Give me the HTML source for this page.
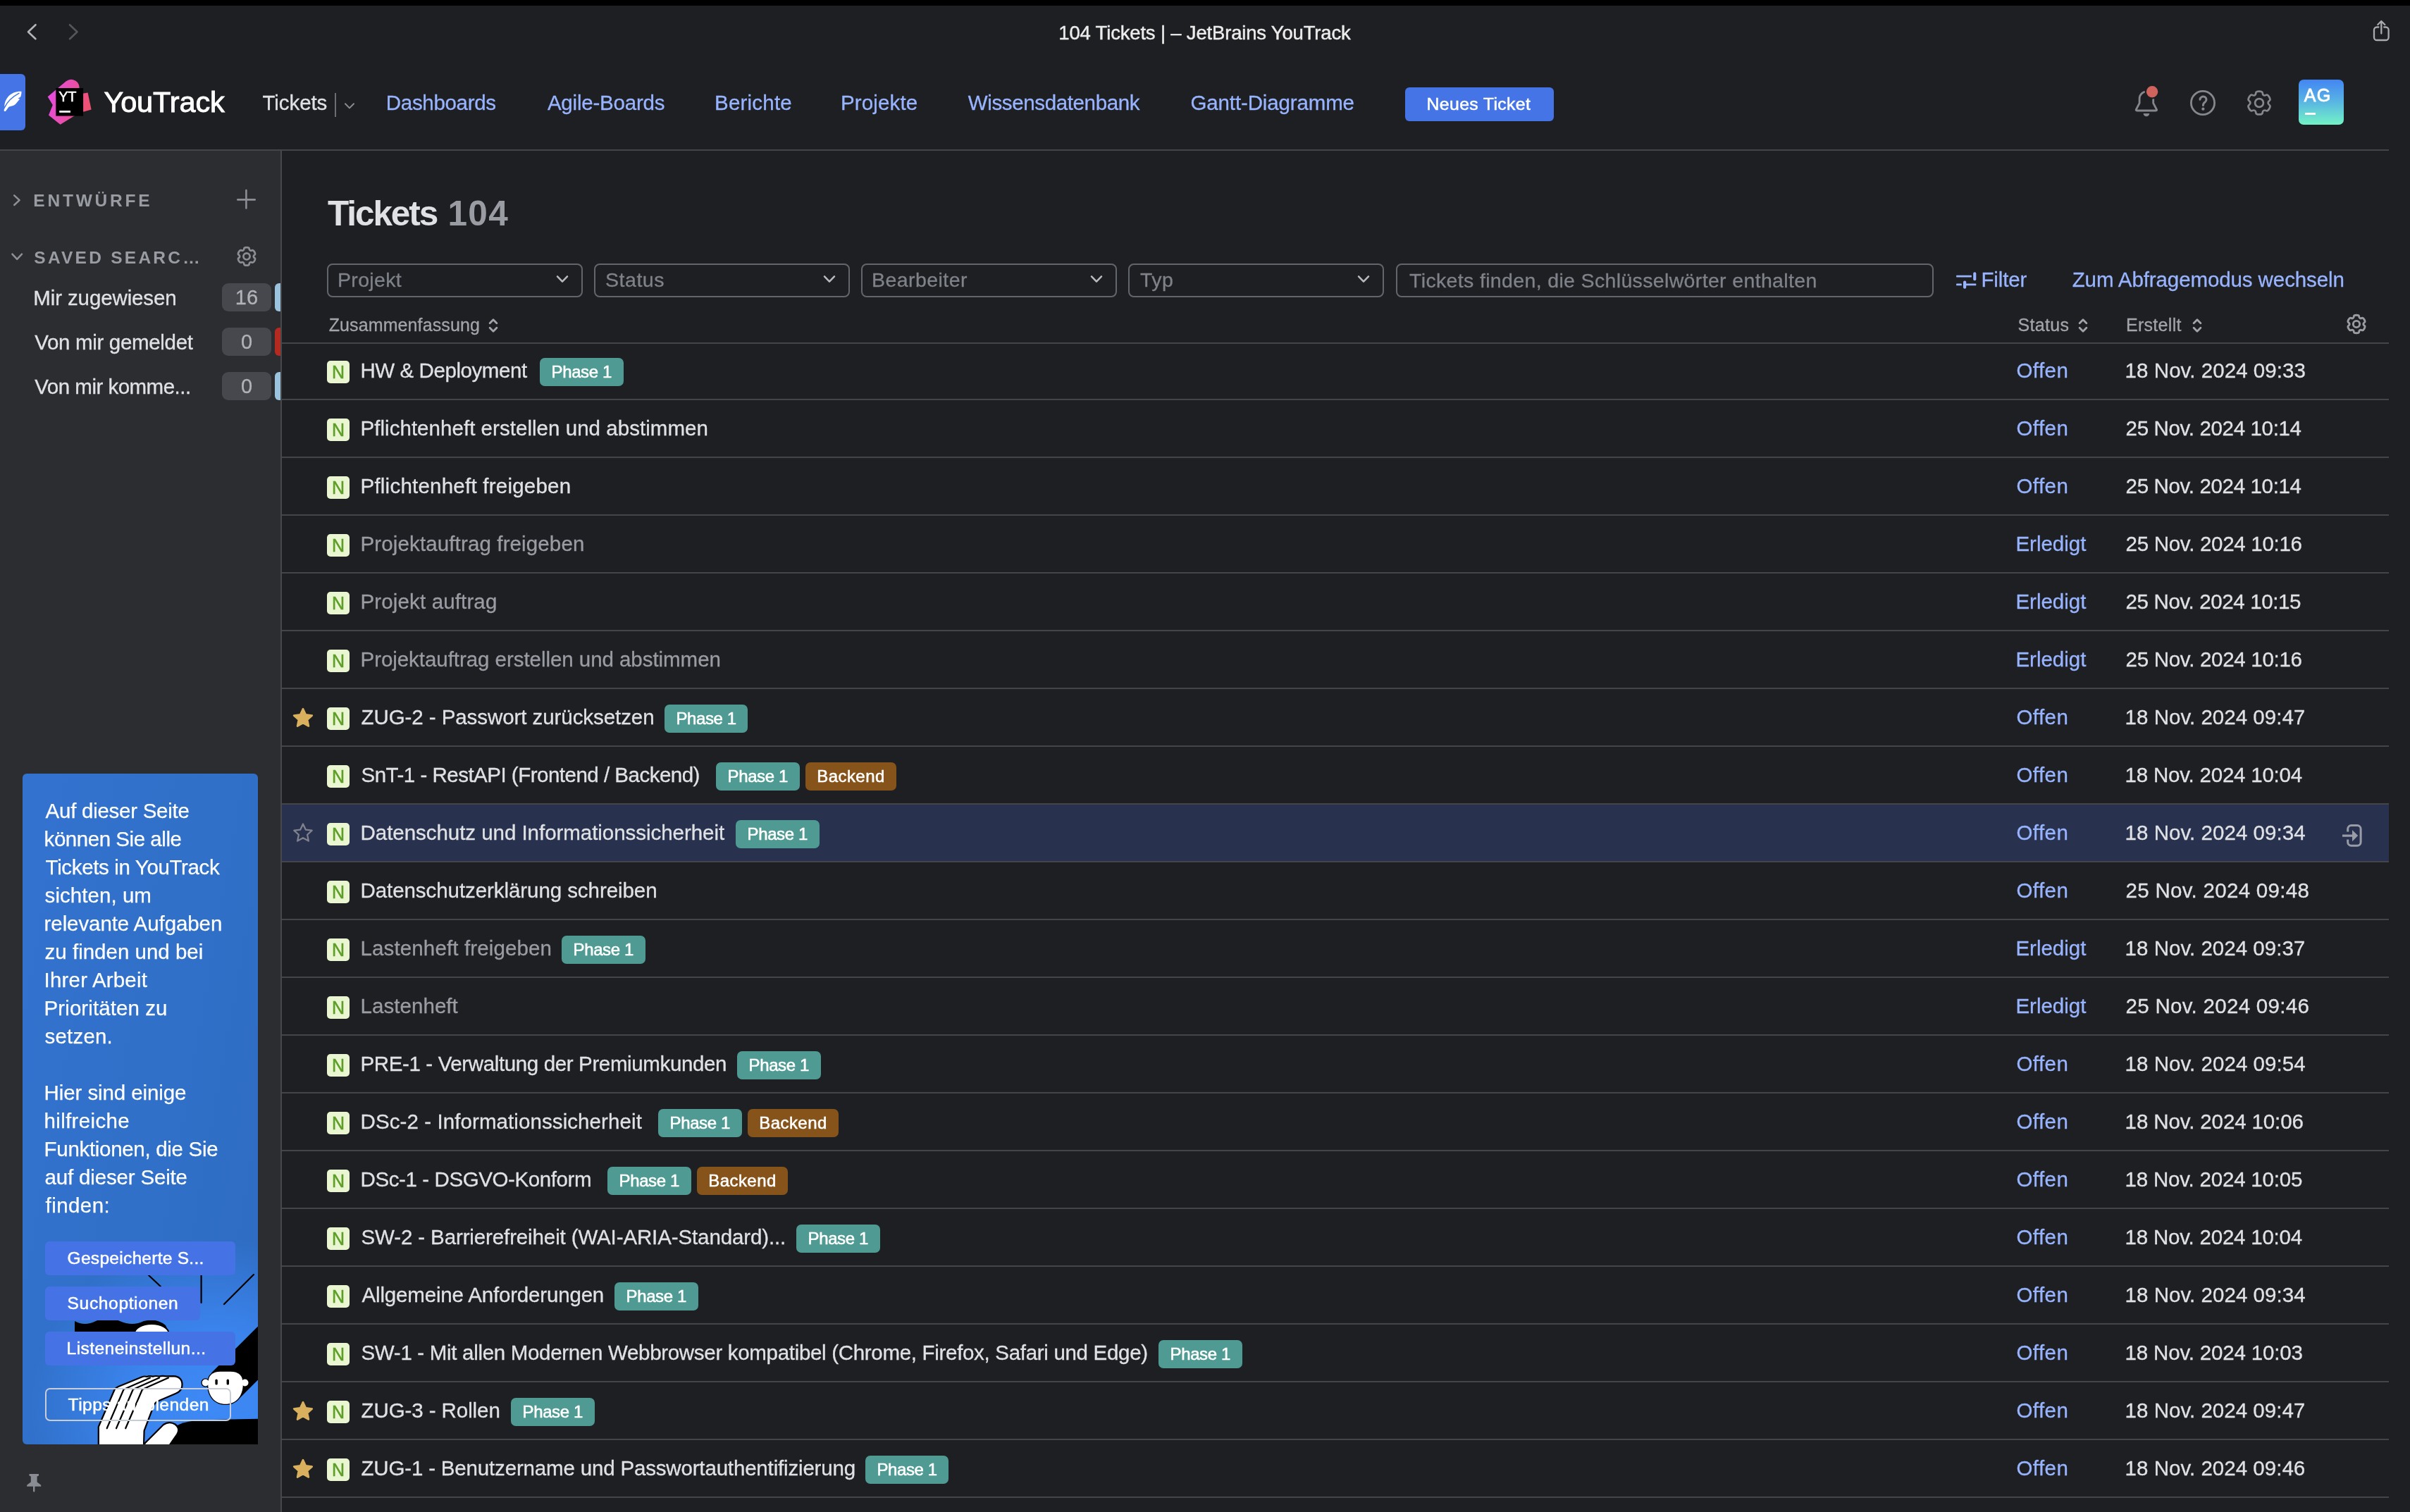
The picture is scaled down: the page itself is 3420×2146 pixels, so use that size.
<!DOCTYPE html>
<html lang="de"><head><meta charset="utf-8"><title>104 Tickets | – JetBrains YouTrack</title>
<style>
html,body{margin:0;padding:0}
body{width:3420px;height:2146px;background:#1e1f22;position:relative;overflow:hidden;font-family:"Liberation Sans", sans-serif;color:#dfe1e5}
.a,.t,.n,.tag,.box,.ln{position:absolute}
.t{white-space:pre;display:inline-block}
header,aside,main,section{position:absolute;left:0;top:0;width:0;height:0}
.ln{background:#43454a;height:2px;left:400px;width:2990px}
.n{left:464px;width:32px;height:32px;border-radius:5px;background:#eaf5d2;color:#5c9f27;font-style:normal;font-size:25px;line-height:33px;text-align:center;-webkit-text-stroke:0.5px #5c9f27}
.tag{height:40px;border-radius:7px;color:#fff;font-weight:400;font-size:24px;line-height:39px;text-align:center;-webkit-text-stroke:0.55px #fff;letter-spacing:-0.4px}
.tag.p{width:118.5px;background:#4f9a92}
.tag.b{width:129px;background:#86531a;letter-spacing:0.45px}
.box{height:44px;top:374px;border:2px solid #63656c;border-radius:8px}
.badge{position:absolute;left:315px;width:70px;height:40px;border-radius:9px;background:#46484d}
.stripe{position:absolute;left:390px;width:8px;height:40px;border-radius:6px 0 0 6px}
.btn{position:absolute;left:64px;height:48px;border-radius:6px;background:#4573e6}
</style></head><body>
<div id="app" style="position:absolute;left:0;top:0;width:3420px;height:2146px;will-change:transform">

<div class="a" style="left:0;top:0;width:3420px;height:8px;background:#000"></div>
<header>
<svg class="a" style="left:30px;top:26px" width="100" height="40" viewBox="30 26 100 40" fill="none" stroke-width="2.6" stroke-linecap="round" stroke-linejoin="round"><path d="M50.5 35.2 L40 45.2 L50.5 55.2" stroke="#b4b5b9"/><path d="M99 35.2 L109.5 45.2 L99 55.2" stroke="#54565b"/></svg>
<svg class="a" style="left:3360px;top:24px" width="40" height="40" viewBox="3360 24 40 40" fill="none" stroke="#a9aaae" stroke-width="2.3" stroke-linecap="round" stroke-linejoin="round"><path d="M3375.4 38.5 H3373 a4 4 0 0 0 -4 4 V53 a4 4 0 0 0 4 4 H3385.6 a4 4 0 0 0 4 -4 V42.5 a4 4 0 0 0 -4 -4 H3383.2"/><path d="M3379.3 47.5 V30.6 M3374.3 35 L3379.3 30 L3384.3 35"/></svg>
<div class="a" style="left:0;top:105px;width:36px;height:80px;background:#4474e6;border-radius:0 6px 6px 0"></div>
<svg class="a" style="left:0;top:120px" width="40" height="50" viewBox="0 120 40 50"><path d="M30.5 129.8 C24 129.4 16 131.8 11.5 137.2 C8 141.2 6.4 146 6.25 150.8 L7.2 152.6 L5.7 155.8 Q5.2 157.2 6.3 157.9 Q7.5 158.5 8.3 157.4 L11.9 152.4 Q12.6 151.5 13.7 151.2 C18 150.4 21 149 22.8 146.9 C25 144.5 27 142.2 28.1 140.6 L25.5 139.7 L29.2 137.6 C30.2 135 30.6 132 30.5 129.8 Z" fill="#fff"/><path d="M6.9 151.9 C11 143.5 18 137.2 26.9 132.4" stroke="#4474e6" stroke-width="1.5" fill="none" stroke-linecap="round"/></svg>
<svg class="a" style="left:60px;top:105px" width="80" height="80" viewBox="60 105 80 80"><linearGradient id="lg1" x1="0" y1="0" x2="1" y2="0.3"><stop offset="0" stop-color="#e54cf0"/><stop offset="0.6" stop-color="#ea4ea8"/><stop offset="1" stop-color="#ee5273"/></linearGradient><path d="M67.7 137.3 L93.5 115.5 Q100 110.5 107 114.5 Q112.3 117.5 112.6 124 L113 133.5 L124.6 131.6 L129.6 155.6 L112 160.5 L85.6 176.8 L69 163.4 L74.8 149 Z" fill="url(#lg1)"/><rect x="79.3" y="125" width="38.8" height="39.6" fill="#000"/><rect x="84.2" y="157" width="15.8" height="2.8" fill="#fff"/></svg>
<span class="t" style="left:83.2px;top:126.2px;font-size:20px;line-height:22px;color:#fff;letter-spacing:-0.4px;-webkit-text-stroke:0.5px #fff">YT</span>
<div class="a" style="left:475.4px;top:132px;width:1.6px;height:34px;background:#6b6d74"></div>
<svg class="a" style="left:484px;top:140px" width="24" height="20" viewBox="-12 -10 24 20" fill="none" stroke="#8a8c93" stroke-width="2.3" stroke-linecap="round" stroke-linejoin="round"><path d="M-7 -3.6 L0 3.6 L7 -3.6" transform="translate(0,0.3) scale(0.86)"/></svg>
<div class="a" style="left:1994px;top:124px;width:211px;height:48px;border-radius:6px;background:#4474e6"></div>
<svg class="a" style="left:3020px;top:115px" width="60" height="60" viewBox="3020 115 60 60" fill="none" stroke="#85878e" stroke-width="2.8" stroke-linecap="round" stroke-linejoin="round"><path d="M3036.1 146.3 V139.9 A9.8 9.8 0 0 1 3055.7 139.9 V146.3 L3060.3 155.2 Q3061.2 157 3059.2 157 H3032.6 Q3030.6 157 3031.5 155.2 Z"/><path d="M3041.6 161 H3050.2 A4.3 4.3 0 0 1 3041.6 161 Z" fill="#85878e" stroke="none"/><circle cx="3054.1" cy="130.2" r="10.4" fill="#1e1f22" stroke="none"/><circle cx="3054.1" cy="130.2" r="8.2" fill="#d0635e" stroke="none"/></svg>
<svg class="a" style="left:3100px;top:120px" width="52" height="52" viewBox="3100 120 52 52" fill="none" stroke="#85878e" stroke-width="2.8" stroke-linecap="round" stroke-linejoin="round"><circle cx="3126" cy="146" r="16.6"/><path d="M3122 141.3 A4.5 4.3 0 1 1 3129.4 144.6 C3127.6 145.9 3126.4 147 3126.4 149.6" stroke-width="3"/><circle cx="3126.4" cy="154.7" r="2.15" fill="#85878e" stroke="none"/></svg>
<svg class="a" style="left:3180px;top:120px" width="52" height="52" viewBox="-26 -26 52 52" fill="none" stroke="#85878e" stroke-width="2.1" stroke-linejoin="round"><g transform="scale(1.285)"><path d="M-3.63 -11.00 Q-3.55 -12.82 0.00 -12.82 Q3.55 -12.82 3.63 -11.00 Q3.71 -9.18 4.90 -8.49 Q6.10 -7.80 7.71 -8.64 Q9.32 -9.49 11.10 -6.41 Q12.88 -3.33 11.34 -2.35 Q9.80 -1.38 9.80 -0.00 Q9.80 1.38 11.34 2.35 Q12.88 3.33 11.10 6.41 Q9.32 9.49 7.71 8.64 Q6.10 7.80 4.90 8.49 Q3.71 9.18 3.63 11.00 Q3.55 12.82 0.00 12.82 Q-3.55 12.82 -3.63 11.00 Q-3.71 9.18 -4.90 8.49 Q-6.10 7.80 -7.71 8.64 Q-9.32 9.49 -11.10 6.41 Q-12.88 3.33 -11.34 2.35 Q-9.80 1.38 -9.80 0.00 Q-9.80 -1.38 -11.34 -2.35 Q-12.88 -3.33 -11.10 -6.41 Q-9.32 -9.49 -7.71 -8.64 Q-6.10 -7.80 -4.90 -8.49 Q-3.71 -9.18 -3.63 -11.00Z"/><circle r="4.6"/></g></svg>
<div class="a" style="left:3262px;top:113px;width:64px;height:64px;border-radius:7px;background:linear-gradient(180deg,#4285f4 0%,#5ab6e2 50%,#72f3c5 100%)"></div>
<div class="a" style="left:3271px;top:160.4px;width:14.6px;height:2.6px;background:#fff"></div>
<div class="a" style="left:0;top:212px;width:3390px;height:2px;background:#43454a"></div>
<span class="t" id="t0" style="left:1502.3px;top:29.9px;font-size:27.5px;line-height:33px;color:#ececec;letter-spacing:-0.18px;-webkit-text-stroke:0.45px #ececec;">104 Tickets | – JetBrains YouTrack</span>
<span class="t" id="t1" style="left:147.4px;top:120.3px;font-size:41.5px;line-height:50px;color:#ffffff;letter-spacing:-0.11px;-webkit-text-stroke:0.9px #ffffff;">YouTrack</span>
<span class="t" id="t2" style="left:372.5px;top:128.1px;font-size:29.5px;line-height:35px;color:#dfe1e5;letter-spacing:-0.08px;-webkit-text-stroke:0.3px #dfe1e5;">Tickets</span>
<span class="t" id="t3" style="left:547.8px;top:128.1px;font-size:29.5px;line-height:35px;color:#98b4ff;letter-spacing:-0.31px;-webkit-text-stroke:0.3px #98b4ff;">Dashboards</span>
<span class="t" id="t4" style="left:776.9px;top:128.1px;font-size:29.5px;line-height:35px;color:#98b4ff;letter-spacing:-0.20px;-webkit-text-stroke:0.3px #98b4ff;">Agile-Boards</span>
<span class="t" id="t5" style="left:1014.0px;top:128.1px;font-size:29.5px;line-height:35px;color:#98b4ff;letter-spacing:0.21px;-webkit-text-stroke:0.3px #98b4ff;">Berichte</span>
<span class="t" id="t6" style="left:1193.0px;top:128.1px;font-size:29.5px;line-height:35px;color:#98b4ff;letter-spacing:0.14px;-webkit-text-stroke:0.3px #98b4ff;">Projekte</span>
<span class="t" id="t7" style="left:1373.8px;top:128.1px;font-size:29.5px;line-height:35px;color:#98b4ff;letter-spacing:-0.37px;-webkit-text-stroke:0.3px #98b4ff;">Wissensdatenbank</span>
<span class="t" id="t8" style="left:1689.5px;top:128.1px;font-size:29.5px;line-height:35px;color:#98b4ff;letter-spacing:-0.14px;-webkit-text-stroke:0.3px #98b4ff;">Gantt-Diagramme</span>
<span class="t" id="t9" style="left:2024.6px;top:132.8px;font-size:24.8px;line-height:30px;color:#ffffff;letter-spacing:0.36px;-webkit-text-stroke:0.55px #ffffff;">Neues Ticket</span>
<span class="t" id="t10" style="left:3269.7px;top:119.8px;font-size:25px;line-height:30px;color:#ffffff;letter-spacing:1.40px;-webkit-text-stroke:0.8px #ffffff;">AG</span>
</header>

<aside>
<div class="a" style="left:0;top:214px;width:398px;height:1932px;background:#2b2d30"></div>
<div class="a" style="left:398px;top:214px;width:2px;height:1932px;background:#46484c"></div>
<svg class="a" style="left:10px;top:270px" width="30" height="28" viewBox="10 270 30 28" fill="none" stroke="#8e9097" stroke-width="2.5" stroke-linecap="round" stroke-linejoin="round"><path d="M20.2 277.4 L27.6 284.2 L20.2 291"/></svg>
<svg class="a" style="left:330px;top:264px" width="40" height="40" viewBox="330 264 40 40" fill="none" stroke="#8c8e95" stroke-width="2.6" stroke-linecap="round"><path d="M337.3 283.4 H361.7 M349.4 270.1 V295.5"/></svg>
<svg class="a" style="left:10px;top:352px" width="30" height="26" viewBox="10 352 30 26" fill="none" stroke="#8e9097" stroke-width="2.5" stroke-linecap="round" stroke-linejoin="round"><path d="M17.4 360.6 L24.2 367.8 L31 360.6"/></svg>
<svg class="a" style="left:330px;top:344px" width="40" height="40" viewBox="-20 -19.9 40 40" fill="none" stroke="#8c8e95" stroke-width="2.7" stroke-linejoin="round"><g><path d="M-3.63 -11.00 Q-3.55 -12.82 0.00 -12.82 Q3.55 -12.82 3.63 -11.00 Q3.71 -9.18 4.90 -8.49 Q6.10 -7.80 7.71 -8.64 Q9.32 -9.49 11.10 -6.41 Q12.88 -3.33 11.34 -2.35 Q9.80 -1.38 9.80 -0.00 Q9.80 1.38 11.34 2.35 Q12.88 3.33 11.10 6.41 Q9.32 9.49 7.71 8.64 Q6.10 7.80 4.90 8.49 Q3.71 9.18 3.63 11.00 Q3.55 12.82 0.00 12.82 Q-3.55 12.82 -3.63 11.00 Q-3.71 9.18 -4.90 8.49 Q-6.10 7.80 -7.71 8.64 Q-9.32 9.49 -11.10 6.41 Q-12.88 3.33 -11.34 2.35 Q-9.80 1.38 -9.80 0.00 Q-9.80 -1.38 -11.34 -2.35 Q-12.88 -3.33 -11.10 -6.41 Q-9.32 -9.49 -7.71 -8.64 Q-6.10 -7.80 -4.90 -8.49 Q-3.71 -9.18 -3.63 -11.00Z"/><circle r="4.6"/></g></svg>

<div class="badge" style="top:402px"></div><div class="stripe" style="top:402px;background:#9cc3dd"></div>
<div class="badge" style="top:465px"></div><div class="stripe" style="top:465px;background:#b52a20"></div>
<div class="badge" style="top:528px"></div><div class="stripe" style="top:528px;background:#9cc3dd"></div>
<span class="t" id="t11" style="left:47.3px;top:270.3px;font-size:24.5px;line-height:29px;color:#9a9ca4;font-weight:700;letter-spacing:3.80px;">ENTWÜRFE</span>
<span class="t" id="t12" style="left:48.3px;top:350.5px;font-size:24.5px;line-height:29px;color:#9a9ca4;font-weight:700;letter-spacing:3.25px;">SAVED SEARC…</span>
<span class="t" id="t13" style="left:47.3px;top:404.5px;font-size:29.5px;line-height:35px;color:#dfe1e5;letter-spacing:-0.12px;-webkit-text-stroke:0.3px #dfe1e5;">Mir zugewiesen</span>
<span class="t" id="t14" style="left:350.0px;top:405.0px;font-size:29px;line-height:35px;color:#b1b3ba;-webkit-text-stroke:0.3px #b1b3ba;transform:translateX(-50%);">16</span>
<span class="t" id="t15" style="left:49.3px;top:467.5px;font-size:29.5px;line-height:35px;color:#dfe1e5;letter-spacing:-0.33px;-webkit-text-stroke:0.3px #dfe1e5;">Von mir gemeldet</span>
<span class="t" id="t16" style="left:350.0px;top:468.0px;font-size:29px;line-height:35px;color:#b1b3ba;-webkit-text-stroke:0.3px #b1b3ba;transform:translateX(-50%);">0</span>
<span class="t" id="t17" style="left:49.3px;top:530.5px;font-size:29.5px;line-height:35px;color:#dfe1e5;letter-spacing:-0.51px;-webkit-text-stroke:0.3px #dfe1e5;">Von mir komme...</span>
<span class="t" id="t18" style="left:350.0px;top:531.0px;font-size:29px;line-height:35px;color:#b1b3ba;-webkit-text-stroke:0.3px #b1b3ba;transform:translateX(-50%);">0</span>
<section>
<div class="a" style="left:32px;top:1098px;width:334px;height:952px;border-radius:6px 6px 0 6px;background:linear-gradient(100deg,#3372cf 0%,#3070c8 55%,#2f6cc2 100%);overflow:hidden">
<div class="a" style="left:0;top:640px;width:334px;height:312px;background:radial-gradient(ellipse 260px 240px at 270px 260px,#3d89f5 0%,#3b84ee 45%,rgba(59,132,238,0) 100%)"></div>
<svg class="a" style="left:0;top:0" width="334" height="952" viewBox="32 1098 334 952">
<g stroke="#000" stroke-width="2.2" fill="none" stroke-linecap="round"><path d="M211 1810 L228 1826 M285.6 1808 V1849 M360 1809 L318 1851"/></g>
<path d="M106 1895 V1875 q14 8 30 0 t34 0 t34 0 q18 -5 31 6 q3 5 3 14 Z" fill="#000"/>
<ellipse cx="215.2" cy="1893" rx="24.5" ry="14" fill="#fff" stroke="#000" stroke-width="2"/>
<path d="M368 1880.5 L300 1948.5 L335 1989.5 L368 1956.5 Z" fill="#000"/>
<path d="M236 2052 L250 2024 Q262 2016.5 290 2015.3 L368 2013.6 V2052 Z" fill="#000"/>
<g fill="#000"><circle cx="291.6" cy="1962.5" r="6.2"/><circle cx="347.6" cy="1962.5" r="6.2"/><path d="M294 1964 Q294 1945.5 313 1945.5 H327 Q346 1945.5 346 1964 C346 1984 334.5 1994 320 1994 C305.5 1994 294 1984 294 1964 Z"/></g>
<g fill="#fff"><circle cx="291.6" cy="1962.5" r="4.9"/><circle cx="347.6" cy="1962.5" r="4.9"/><path d="M295.2 1964 Q295.2 1946.7 313 1946.7 H327 Q344.8 1946.7 344.8 1964 C344.8 1983 334 1992.8 320 1992.8 C306 1992.8 295.2 1983 295.2 1964 Z"/></g>
<rect x="305.4" y="1957.6" width="3.4" height="8" rx="1.7" fill="#000"/><rect x="321.6" y="1957.6" width="3.4" height="8" rx="1.7" fill="#000"/>
<path d="M139.8 2052 V2025 L162.5 1972.5 Q164 1969.5 168 1968 L201 1954.4 Q205 1952.8 208.5 1954 Q212 1952.6 217 1953.6 Q221 1952.4 226 1953.6 Q230 1952.4 236 1953.4 L246 1953.2 Q258.5 1954 258.5 1965 Q258.5 1974.5 249 1978 L224.5 1988.5 Q218.5 1991.5 217 1998 L204.6 2030.6 L204 2052 Z" fill="#fff" stroke="#000" stroke-width="2.2" stroke-linejoin="round"/>
<g stroke="#000" stroke-width="2.2" fill="none" stroke-linecap="round" stroke-linejoin="round"><path d="M151.7 2027.3 L175.5 1972 L213 1955.6"/><path d="M165 2027.3 L188.8 1972 L226 1955.6"/><path d="M178.2 2027.3 L202 1972 L239 1955.6"/></g>
<path d="M204 2052 L206 2048 L232 2022 Q240 2016.5 248.5 2021.5 Q256.5 2027.5 251 2036 L240 2052 Z" fill="#fff" stroke="#000" stroke-width="2.2" stroke-linejoin="round"/>
</svg></div>
<div class="btn" style="top:1762px;width:270px"></div>
<div class="btn" style="top:1826px;width:220px"></div>
<div class="btn" style="top:1890px;width:270px"></div>
<div class="a" style="left:64.2px;top:1970.3px;width:259.4px;height:42.8px;border:2.4px solid #c9cdd8;border-radius:7px"></div>
<span class="t" id="t19" style="left:64.6px;top:1132.8px;font-size:29.5px;line-height:35px;color:#ffffff;letter-spacing:-0.27px;-webkit-text-stroke:0.25px #ffffff;">Auf dieser Seite</span>
<span class="t" id="t20" style="left:62.6px;top:1172.8px;font-size:29.5px;line-height:35px;color:#ffffff;letter-spacing:-0.46px;-webkit-text-stroke:0.25px #ffffff;">können Sie alle</span>
<span class="t" id="t21" style="left:64.6px;top:1212.8px;font-size:29.5px;line-height:35px;color:#ffffff;letter-spacing:-0.36px;-webkit-text-stroke:0.25px #ffffff;">Tickets in YouTrack</span>
<span class="t" id="t22" style="left:63.6px;top:1252.8px;font-size:29.5px;line-height:35px;color:#ffffff;letter-spacing:0.05px;-webkit-text-stroke:0.25px #ffffff;">sichten, um</span>
<span class="t" id="t23" style="left:62.6px;top:1292.8px;font-size:29.5px;line-height:35px;color:#ffffff;letter-spacing:-0.09px;-webkit-text-stroke:0.25px #ffffff;">relevante Aufgaben</span>
<span class="t" id="t24" style="left:63.6px;top:1332.8px;font-size:29.5px;line-height:35px;color:#ffffff;-webkit-text-stroke:0.25px #ffffff;">zu finden und bei</span>
<span class="t" id="t25" style="left:62.6px;top:1372.8px;font-size:29.5px;line-height:35px;color:#ffffff;letter-spacing:0.18px;-webkit-text-stroke:0.25px #ffffff;">Ihrer Arbeit</span>
<span class="t" id="t26" style="left:62.6px;top:1412.8px;font-size:29.5px;line-height:35px;color:#ffffff;letter-spacing:0.08px;-webkit-text-stroke:0.25px #ffffff;">Prioritäten zu</span>
<span class="t" id="t27" style="left:63.6px;top:1452.8px;font-size:29.5px;line-height:35px;color:#ffffff;letter-spacing:0.17px;-webkit-text-stroke:0.25px #ffffff;">setzen.</span>
<span class="t" id="t28" style="left:62.6px;top:1532.8px;font-size:29.5px;line-height:35px;color:#ffffff;letter-spacing:-0.10px;-webkit-text-stroke:0.25px #ffffff;">Hier sind einige</span>
<span class="t" id="t29" style="left:62.6px;top:1572.8px;font-size:29.5px;line-height:35px;color:#ffffff;letter-spacing:0.33px;-webkit-text-stroke:0.25px #ffffff;">hilfreiche</span>
<span class="t" id="t30" style="left:62.6px;top:1612.8px;font-size:29.5px;line-height:35px;color:#ffffff;letter-spacing:-0.31px;-webkit-text-stroke:0.25px #ffffff;">Funktionen, die Sie</span>
<span class="t" id="t31" style="left:63.6px;top:1652.8px;font-size:29.5px;line-height:35px;color:#ffffff;letter-spacing:-0.17px;-webkit-text-stroke:0.25px #ffffff;">auf dieser Seite</span>
<span class="t" id="t32" style="left:64.6px;top:1692.8px;font-size:29.5px;line-height:35px;color:#ffffff;letter-spacing:0.42px;-webkit-text-stroke:0.25px #ffffff;">finden:</span>
<span class="t" id="t33" style="left:95.6px;top:1770.8px;font-size:24.6px;line-height:30px;color:#ffffff;letter-spacing:0.23px;-webkit-text-stroke:0.5px #ffffff;">Gespeicherte S...</span>
<span class="t" id="t34" style="left:95.6px;top:1834.6px;font-size:24.6px;line-height:30px;color:#ffffff;letter-spacing:0.61px;-webkit-text-stroke:0.5px #ffffff;">Suchoptionen</span>
<span class="t" id="t35" style="left:94.6px;top:1898.6px;font-size:24.6px;line-height:30px;color:#ffffff;letter-spacing:0.41px;-webkit-text-stroke:0.5px #ffffff;">Listeneinstellun...</span>
<span class="t" id="t36" style="left:96.6px;top:1978.6px;font-size:24.6px;line-height:30px;color:#ffffff;letter-spacing:0.44px;-webkit-text-stroke:0.5px #ffffff;">Tipps ausblenden</span>
</section>
<svg class="a" style="left:34px;top:2088px" width="30" height="34" viewBox="34 2088 30 34"><path d="M41.5 2092 H55 V2094.6 L52.6 2095.6 V2103.4 L58.2 2107.8 V2109.8 H49.4 V2116.4 L48.2 2118 L47 2116.4 V2109.8 H38.2 V2107.8 L43.8 2103.4 V2095.6 L41.5 2094.6 Z" fill="#8a8c93"/></svg>
</aside>

<main>
<span class="t" id="t37" style="left:465.0px;top:272.8px;font-size:49.5px;line-height:59px;color:#dfe1e5;font-weight:700;letter-spacing:-2.08px;">Tickets</span>
<span class="t" id="t38" style="left:635.6px;top:272.8px;font-size:49.5px;line-height:59px;color:#9a9ca4;font-weight:700;letter-spacing:1.25px;">104</span>
<span class="t" id="t39" style="left:479.0px;top:380.2px;font-size:28.5px;line-height:34px;color:#7f828a;letter-spacing:0.33px;-webkit-text-stroke:0.3px #7f828a;">Projekt</span>
<span class="t" id="t40" style="left:859.0px;top:380.2px;font-size:28.5px;line-height:34px;color:#7f828a;letter-spacing:0.54px;-webkit-text-stroke:0.3px #7f828a;">Status</span>
<span class="t" id="t41" style="left:1237.0px;top:380.2px;font-size:28.5px;line-height:34px;color:#7f828a;letter-spacing:0.44px;-webkit-text-stroke:0.3px #7f828a;">Bearbeiter</span>
<span class="t" id="t42" style="left:1618.0px;top:380.2px;font-size:28.5px;line-height:34px;color:#7f828a;letter-spacing:0.40px;-webkit-text-stroke:0.3px #7f828a;">Typ</span>
<span class="t" id="t43" style="left:2000.0px;top:381.3px;font-size:28.5px;line-height:34px;color:#7f828a;letter-spacing:0.35px;-webkit-text-stroke:0.3px #7f828a;">Tickets finden, die Schlüsselwörter enthalten</span>
<span class="t" id="t44" style="left:2811.4px;top:379.3px;font-size:29.5px;line-height:35px;color:#98b4ff;letter-spacing:-0.10px;-webkit-text-stroke:0.3px #98b4ff;">Filter</span>
<span class="t" id="t45" style="left:2940.7px;top:379.3px;font-size:29.5px;line-height:35px;color:#98b4ff;letter-spacing:-0.10px;-webkit-text-stroke:0.3px #98b4ff;">Zum Abfragemodus wechseln</span>
<span class="t" id="t46" style="left:466.7px;top:445.8px;font-size:25px;line-height:30px;color:#a2a4ab;letter-spacing:0.11px;-webkit-text-stroke:0.3px #a2a4ab;">Zusammenfassung</span>
<span class="t" id="t47" style="left:2863.4px;top:445.8px;font-size:25px;line-height:30px;color:#a2a4ab;letter-spacing:0.36px;-webkit-text-stroke:0.3px #a2a4ab;">Status</span>
<span class="t" id="t48" style="left:3017.0px;top:445.8px;font-size:25px;line-height:30px;color:#a2a4ab;letter-spacing:0.29px;-webkit-text-stroke:0.3px #a2a4ab;">Erstellt</span>
<div class="box" style="left:464px;width:359px"></div>
<div class="box" style="left:843px;width:359px"></div>
<div class="box" style="left:1222px;width:359px"></div>
<div class="box" style="left:1601px;width:359px"></div>
<div class="box" style="left:1981px;width:758.5px"></div>
<svg class="a" style="left:786px;top:386px" width="24" height="20" viewBox="-12 -10 24 20" fill="none" stroke="#b9bbc1" stroke-width="2.5" stroke-linecap="round" stroke-linejoin="round"><path d="M-7 -3.6 L0 3.6 L7 -3.6" transform="scale(1.0)"/></svg>
<svg class="a" style="left:1165px;top:386px" width="24" height="20" viewBox="-12 -10 24 20" fill="none" stroke="#b9bbc1" stroke-width="2.5" stroke-linecap="round" stroke-linejoin="round"><path d="M-7 -3.6 L0 3.6 L7 -3.6" transform="scale(1.0)"/></svg>
<svg class="a" style="left:1544px;top:386px" width="24" height="20" viewBox="-12 -10 24 20" fill="none" stroke="#b9bbc1" stroke-width="2.5" stroke-linecap="round" stroke-linejoin="round"><path d="M-7 -3.6 L0 3.6 L7 -3.6" transform="scale(1.0)"/></svg>
<svg class="a" style="left:1923px;top:386px" width="24" height="20" viewBox="-12 -10 24 20" fill="none" stroke="#b9bbc1" stroke-width="2.5" stroke-linecap="round" stroke-linejoin="round"><path d="M-7 -3.6 L0 3.6 L7 -3.6" transform="scale(1.0)"/></svg>
<svg class="a" style="left:2770px;top:380px" width="40" height="36" viewBox="2770 380 40 36" fill="#98b4ff"><rect x="2776.1" y="390.7" width="21.8" height="2.7" rx="0.6"/><rect x="2800.2" y="386.2" width="4.1" height="12.1" rx="2"/><rect x="2776.1" y="402.6" width="7.7" height="2.7" rx="0.6"/><rect x="2786" y="398.6" width="4.2" height="11.2" rx="2"/><rect x="2789" y="402.6" width="15.3" height="2.7" rx="0.6"/></svg>
<svg class="a" style="left:690.2px;top:450px" width="20" height="24" viewBox="-10 -12 20 24" fill="none" stroke="#a2a4ab" stroke-width="2.8" stroke-linecap="round" stroke-linejoin="round"><path d="M-4.9 -3.3 L0 -8.2 L4.9 -3.3 M-4.9 3.3 L0 8.2 L4.9 3.3"/></svg>
<svg class="a" style="left:2946px;top:450px" width="20" height="24" viewBox="-10 -12 20 24" fill="none" stroke="#a2a4ab" stroke-width="2.8" stroke-linecap="round" stroke-linejoin="round"><path d="M-4.9 -3.3 L0 -8.2 L4.9 -3.3 M-4.9 3.3 L0 8.2 L4.9 3.3"/></svg>
<svg class="a" style="left:3108.2px;top:450px" width="20" height="24" viewBox="-10 -12 20 24" fill="none" stroke="#a2a4ab" stroke-width="2.8" stroke-linecap="round" stroke-linejoin="round"><path d="M-4.9 -3.3 L0 -8.2 L4.9 -3.3 M-4.9 3.3 L0 8.2 L4.9 3.3"/></svg>
<svg class="a" style="left:3324px;top:440px" width="40" height="40" viewBox="-20 -20 40 40" fill="none" stroke="#9a9ca3" stroke-width="2.9" stroke-linejoin="round"><g><path d="M-3.63 -11.00 Q-3.55 -12.82 0.00 -12.82 Q3.55 -12.82 3.63 -11.00 Q3.71 -9.18 4.90 -8.49 Q6.10 -7.80 7.71 -8.64 Q9.32 -9.49 11.10 -6.41 Q12.88 -3.33 11.34 -2.35 Q9.80 -1.38 9.80 -0.00 Q9.80 1.38 11.34 2.35 Q12.88 3.33 11.10 6.41 Q9.32 9.49 7.71 8.64 Q6.10 7.80 4.90 8.49 Q3.71 9.18 3.63 11.00 Q3.55 12.82 0.00 12.82 Q-3.55 12.82 -3.63 11.00 Q-3.71 9.18 -4.90 8.49 Q-6.10 7.80 -7.71 8.64 Q-9.32 9.49 -11.10 6.41 Q-12.88 3.33 -11.34 2.35 Q-9.80 1.38 -9.80 0.00 Q-9.80 -1.38 -11.34 -2.35 Q-12.88 -3.33 -11.10 -6.41 Q-9.32 -9.49 -7.71 -8.64 Q-6.10 -7.80 -4.90 -8.49 Q-3.71 -9.18 -3.63 -11.00Z"/><circle r="4.65"/></g></svg>
<div class="ln" style="top:486px"></div>
<div class="row">
<i class="n" style="top:512px">N</i>
<span class="t" id="t49" style="left:511.5px;top:508.3px;font-size:29.5px;line-height:35px;color:#dfe1e5;letter-spacing:-0.43px;-webkit-text-stroke:0.3px #dfe1e5;">HW &amp; Deployment</span>
<b class="tag p" style="left:766.0px;top:508px">Phase 1</b>
<span class="t" id="t50" style="left:2861.4px;top:508.3px;font-size:29.5px;line-height:35px;color:#98b4ff;letter-spacing:0.45px;-webkit-text-stroke:0.3px #98b4ff;">Offen</span>
<span class="t" id="t51" style="left:3015.6px;top:508.3px;font-size:29.5px;line-height:35px;color:#dfe1e5;letter-spacing:0.06px;-webkit-text-stroke:0.3px #dfe1e5;">18 Nov. 2024 09:33</span>
</div>
<div class="ln" style="top:566px"></div>
<div class="row">
<i class="n" style="top:594px">N</i>
<span class="t" id="t52" style="left:511.5px;top:590.3px;font-size:29.5px;line-height:35px;color:#dfe1e5;letter-spacing:0.04px;-webkit-text-stroke:0.3px #dfe1e5;">Pflichtenheft erstellen und abstimmen</span>
<span class="t" id="t53" style="left:2861.4px;top:590.3px;font-size:29.5px;line-height:35px;color:#98b4ff;letter-spacing:0.45px;-webkit-text-stroke:0.3px #98b4ff;">Offen</span>
<span class="t" id="t54" style="left:3016.6px;top:590.3px;font-size:29.5px;line-height:35px;color:#dfe1e5;letter-spacing:-0.35px;-webkit-text-stroke:0.3px #dfe1e5;">25 Nov. 2024 10:14</span>
</div>
<div class="ln" style="top:648px"></div>
<div class="row">
<i class="n" style="top:676px">N</i>
<span class="t" id="t55" style="left:511.5px;top:672.3px;font-size:29.5px;line-height:35px;color:#dfe1e5;letter-spacing:0.23px;-webkit-text-stroke:0.3px #dfe1e5;">Pflichtenheft freigeben</span>
<span class="t" id="t56" style="left:2861.4px;top:672.3px;font-size:29.5px;line-height:35px;color:#98b4ff;letter-spacing:0.45px;-webkit-text-stroke:0.3px #98b4ff;">Offen</span>
<span class="t" id="t57" style="left:3016.6px;top:672.3px;font-size:29.5px;line-height:35px;color:#dfe1e5;letter-spacing:-0.35px;-webkit-text-stroke:0.3px #dfe1e5;">25 Nov. 2024 10:14</span>
</div>
<div class="ln" style="top:730px"></div>
<div class="row">
<i class="n" style="top:758px">N</i>
<span class="t" id="t58" style="left:511.5px;top:754.3px;font-size:29.5px;line-height:35px;color:#9a9ca4;letter-spacing:0.13px;-webkit-text-stroke:0.3px #9a9ca4;">Projektauftrag freigeben</span>
<span class="t" id="t59" style="left:2860.4px;top:754.3px;font-size:29.5px;line-height:35px;color:#98b4ff;-webkit-text-stroke:0.3px #98b4ff;">Erledigt</span>
<span class="t" id="t60" style="left:3016.6px;top:754.3px;font-size:29.5px;line-height:35px;color:#dfe1e5;letter-spacing:-0.29px;-webkit-text-stroke:0.3px #dfe1e5;">25 Nov. 2024 10:16</span>
</div>
<div class="ln" style="top:812px"></div>
<div class="row">
<i class="n" style="top:840px">N</i>
<span class="t" id="t61" style="left:511.5px;top:836.3px;font-size:29.5px;line-height:35px;color:#9a9ca4;letter-spacing:0.14px;-webkit-text-stroke:0.3px #9a9ca4;">Projekt auftrag</span>
<span class="t" id="t62" style="left:2860.4px;top:836.3px;font-size:29.5px;line-height:35px;color:#98b4ff;-webkit-text-stroke:0.3px #98b4ff;">Erledigt</span>
<span class="t" id="t63" style="left:3016.6px;top:836.3px;font-size:29.5px;line-height:35px;color:#dfe1e5;letter-spacing:-0.38px;-webkit-text-stroke:0.3px #dfe1e5;">25 Nov. 2024 10:15</span>
</div>
<div class="ln" style="top:894px"></div>
<div class="row">
<i class="n" style="top:922px">N</i>
<span class="t" id="t64" style="left:511.5px;top:918.3px;font-size:29.5px;line-height:35px;color:#9a9ca4;letter-spacing:-0.05px;-webkit-text-stroke:0.3px #9a9ca4;">Projektauftrag erstellen und abstimmen</span>
<span class="t" id="t65" style="left:2860.4px;top:918.3px;font-size:29.5px;line-height:35px;color:#98b4ff;-webkit-text-stroke:0.3px #98b4ff;">Erledigt</span>
<span class="t" id="t66" style="left:3016.6px;top:918.3px;font-size:29.5px;line-height:35px;color:#dfe1e5;letter-spacing:-0.29px;-webkit-text-stroke:0.3px #dfe1e5;">25 Nov. 2024 10:16</span>
</div>
<div class="ln" style="top:976px"></div>
<div class="row">
<svg class="a" style="left:414px;top:1003px" width="32" height="32" viewBox="-16 -16 32 32"><path d="M0.00 -12.90 L3.82 -4.66 L12.84 -3.57 L6.18 2.61 L7.94 11.52 L0.00 7.10 L-7.94 11.52 L-6.18 2.61 L-12.84 -3.57 L-3.82 -4.66Z" fill="#d8b05e" stroke="#d8b05e" stroke-width="2.6" stroke-linejoin="round"/></svg>
<i class="n" style="top:1004px">N</i>
<span class="t" id="t67" style="left:512.5px;top:1000.3px;font-size:29.5px;line-height:35px;color:#dfe1e5;letter-spacing:-0.07px;-webkit-text-stroke:0.3px #dfe1e5;">ZUG-2 - Passwort zurücksetzen</span>
<b class="tag p" style="left:942.8px;top:1000px">Phase 1</b>
<span class="t" id="t68" style="left:2861.4px;top:1000.3px;font-size:29.5px;line-height:35px;color:#98b4ff;letter-spacing:0.45px;-webkit-text-stroke:0.3px #98b4ff;">Offen</span>
<span class="t" id="t69" style="left:3015.6px;top:1000.3px;font-size:29.5px;line-height:35px;color:#dfe1e5;letter-spacing:0.02px;-webkit-text-stroke:0.3px #dfe1e5;">18 Nov. 2024 09:47</span>
</div>
<div class="ln" style="top:1058px"></div>
<div class="row">
<i class="n" style="top:1086px">N</i>
<span class="t" id="t70" style="left:512.5px;top:1082.3px;font-size:29.5px;line-height:35px;color:#dfe1e5;letter-spacing:-0.50px;-webkit-text-stroke:0.3px #dfe1e5;">SnT-1 - RestAPI (Frontend / Backend)</span>
<b class="tag p" style="left:1016.0px;top:1082px">Phase 1</b>
<b class="tag b" style="left:1143.0px;top:1082px">Backend</b>
<span class="t" id="t71" style="left:2861.4px;top:1082.3px;font-size:29.5px;line-height:35px;color:#98b4ff;letter-spacing:0.45px;-webkit-text-stroke:0.3px #98b4ff;">Offen</span>
<span class="t" id="t72" style="left:3015.6px;top:1082.3px;font-size:29.5px;line-height:35px;color:#dfe1e5;letter-spacing:-0.22px;-webkit-text-stroke:0.3px #dfe1e5;">18 Nov. 2024 10:04</span>
</div>
<div class="ln" style="top:1140px"></div>
<div class="a" style="left:400px;top:1142px;width:2990px;height:80px;background:#28324e"></div>
<svg class="a" style="left:3318px;top:1166px" width="40" height="40" viewBox="3318 1162 40 40" fill="none" stroke="#999ca7" stroke-width="3" ><path d="M3331.7 1176.4 V1172.6 a5 5 0 0 1 5 -5 H3345.1 a5 5 0 0 1 5 5 V1191.2 a5 5 0 0 1 -5 5 H3336.7 a5 5 0 0 1 -5 -5 V1187.6"/><path d="M3324 1182.1 H3339" stroke-width="3.2"/><path d="M3338 1174 L3346.2 1182.1 L3338 1190.2 Z" fill="#999ca7" stroke="none"/></svg>
<div class="row">
<svg class="a" style="left:414px;top:1167px" width="32" height="32" viewBox="-16 -16 32 32"><path d="M0.00 -12.90 L3.82 -4.66 L12.84 -3.57 L6.18 2.61 L7.94 11.52 L0.00 7.10 L-7.94 11.52 L-6.18 2.61 L-12.84 -3.57 L-3.82 -4.66Z" fill="none" stroke="#7f828c" stroke-width="2.3" stroke-linejoin="round" transform="translate(0,-0.8) scale(0.99)"/></svg>
<i class="n" style="top:1168px">N</i>
<span class="t" id="t73" style="left:511.5px;top:1164.3px;font-size:29.5px;line-height:35px;color:#dfe1e5;letter-spacing:-0.04px;-webkit-text-stroke:0.3px #dfe1e5;">Datenschutz und Informationssicherheit</span>
<b class="tag p" style="left:1044.0px;top:1164px">Phase 1</b>
<span class="t" id="t74" style="left:2861.4px;top:1164.3px;font-size:29.5px;line-height:35px;color:#98b4ff;letter-spacing:0.45px;-webkit-text-stroke:0.3px #98b4ff;">Offen</span>
<span class="t" id="t75" style="left:3015.6px;top:1164.3px;font-size:29.5px;line-height:35px;color:#dfe1e5;letter-spacing:0.04px;-webkit-text-stroke:0.3px #dfe1e5;">18 Nov. 2024 09:34</span>
</div>
<div class="ln" style="top:1222px"></div>
<div class="row">
<i class="n" style="top:1250px">N</i>
<span class="t" id="t76" style="left:511.5px;top:1246.3px;font-size:29.5px;line-height:35px;color:#dfe1e5;letter-spacing:-0.07px;-webkit-text-stroke:0.3px #dfe1e5;">Datenschutzerklärung schreiben</span>
<span class="t" id="t77" style="left:2861.4px;top:1246.3px;font-size:29.5px;line-height:35px;color:#98b4ff;letter-spacing:0.45px;-webkit-text-stroke:0.3px #98b4ff;">Offen</span>
<span class="t" id="t78" style="left:3016.6px;top:1246.3px;font-size:29.5px;line-height:35px;color:#dfe1e5;letter-spacing:0.29px;-webkit-text-stroke:0.3px #dfe1e5;">25 Nov. 2024 09:48</span>
</div>
<div class="ln" style="top:1304px"></div>
<div class="row">
<i class="n" style="top:1332px">N</i>
<span class="t" id="t79" style="left:511.5px;top:1328.3px;font-size:29.5px;line-height:35px;color:#9a9ca4;letter-spacing:0.13px;-webkit-text-stroke:0.3px #9a9ca4;">Lastenheft freigeben</span>
<b class="tag p" style="left:797.0px;top:1328px">Phase 1</b>
<span class="t" id="t80" style="left:2860.4px;top:1328.3px;font-size:29.5px;line-height:35px;color:#98b4ff;-webkit-text-stroke:0.3px #98b4ff;">Erledigt</span>
<span class="t" id="t81" style="left:3015.6px;top:1328.3px;font-size:29.5px;line-height:35px;color:#dfe1e5;letter-spacing:0.02px;-webkit-text-stroke:0.3px #dfe1e5;">18 Nov. 2024 09:37</span>
</div>
<div class="ln" style="top:1386px"></div>
<div class="row">
<i class="n" style="top:1414px">N</i>
<span class="t" id="t82" style="left:511.5px;top:1410.3px;font-size:29.5px;line-height:35px;color:#9a9ca4;letter-spacing:0.06px;-webkit-text-stroke:0.3px #9a9ca4;">Lastenheft</span>
<span class="t" id="t83" style="left:2860.4px;top:1410.3px;font-size:29.5px;line-height:35px;color:#98b4ff;-webkit-text-stroke:0.3px #98b4ff;">Erledigt</span>
<span class="t" id="t84" style="left:3016.6px;top:1410.3px;font-size:29.5px;line-height:35px;color:#dfe1e5;letter-spacing:0.29px;-webkit-text-stroke:0.3px #dfe1e5;">25 Nov. 2024 09:46</span>
</div>
<div class="ln" style="top:1468px"></div>
<div class="row">
<i class="n" style="top:1496px">N</i>
<span class="t" id="t85" style="left:511.5px;top:1492.3px;font-size:29.5px;line-height:35px;color:#dfe1e5;letter-spacing:-0.37px;-webkit-text-stroke:0.3px #dfe1e5;">PRE-1 - Verwaltung der Premiumkunden</span>
<b class="tag p" style="left:1046.0px;top:1492px">Phase 1</b>
<span class="t" id="t86" style="left:2861.4px;top:1492.3px;font-size:29.5px;line-height:35px;color:#98b4ff;letter-spacing:0.45px;-webkit-text-stroke:0.3px #98b4ff;">Offen</span>
<span class="t" id="t87" style="left:3015.6px;top:1492.3px;font-size:29.5px;line-height:35px;color:#dfe1e5;letter-spacing:0.04px;-webkit-text-stroke:0.3px #dfe1e5;">18 Nov. 2024 09:54</span>
</div>
<div class="ln" style="top:1550px"></div>
<div class="row">
<i class="n" style="top:1578px">N</i>
<span class="t" id="t88" style="left:511.5px;top:1574.3px;font-size:29.5px;line-height:35px;color:#dfe1e5;letter-spacing:0.09px;-webkit-text-stroke:0.3px #dfe1e5;">DSc-2 - Informationssicherheit</span>
<b class="tag p" style="left:934.0px;top:1574px">Phase 1</b>
<b class="tag b" style="left:1061.0px;top:1574px">Backend</b>
<span class="t" id="t89" style="left:2861.4px;top:1574.3px;font-size:29.5px;line-height:35px;color:#98b4ff;letter-spacing:0.45px;-webkit-text-stroke:0.3px #98b4ff;">Offen</span>
<span class="t" id="t90" style="left:3015.6px;top:1574.3px;font-size:29.5px;line-height:35px;color:#dfe1e5;letter-spacing:-0.12px;-webkit-text-stroke:0.3px #dfe1e5;">18 Nov. 2024 10:06</span>
</div>
<div class="ln" style="top:1632px"></div>
<div class="row">
<i class="n" style="top:1660px">N</i>
<span class="t" id="t91" style="left:511.5px;top:1656.3px;font-size:29.5px;line-height:35px;color:#dfe1e5;letter-spacing:-0.40px;-webkit-text-stroke:0.3px #dfe1e5;">DSc-1 - DSGVO-Konform</span>
<b class="tag p" style="left:862.0px;top:1656px">Phase 1</b>
<b class="tag b" style="left:989.0px;top:1656px">Backend</b>
<span class="t" id="t92" style="left:2861.4px;top:1656.3px;font-size:29.5px;line-height:35px;color:#98b4ff;letter-spacing:0.45px;-webkit-text-stroke:0.3px #98b4ff;">Offen</span>
<span class="t" id="t93" style="left:3015.6px;top:1656.3px;font-size:29.5px;line-height:35px;color:#dfe1e5;letter-spacing:-0.21px;-webkit-text-stroke:0.3px #dfe1e5;">18 Nov. 2024 10:05</span>
</div>
<div class="ln" style="top:1714px"></div>
<div class="row">
<i class="n" style="top:1742px">N</i>
<span class="t" id="t94" style="left:512.5px;top:1738.3px;font-size:29.5px;line-height:35px;color:#dfe1e5;letter-spacing:-0.12px;-webkit-text-stroke:0.3px #dfe1e5;">SW-2 - Barrierefreiheit (WAI-ARIA-Standard)...</span>
<b class="tag p" style="left:1130.0px;top:1738px">Phase 1</b>
<span class="t" id="t95" style="left:2861.4px;top:1738.3px;font-size:29.5px;line-height:35px;color:#98b4ff;letter-spacing:0.45px;-webkit-text-stroke:0.3px #98b4ff;">Offen</span>
<span class="t" id="t96" style="left:3015.6px;top:1738.3px;font-size:29.5px;line-height:35px;color:#dfe1e5;letter-spacing:-0.22px;-webkit-text-stroke:0.3px #dfe1e5;">18 Nov. 2024 10:04</span>
</div>
<div class="ln" style="top:1796px"></div>
<div class="row">
<i class="n" style="top:1824px">N</i>
<span class="t" id="t97" style="left:513.5px;top:1820.3px;font-size:29.5px;line-height:35px;color:#dfe1e5;letter-spacing:-0.17px;-webkit-text-stroke:0.3px #dfe1e5;">Allgemeine Anforderungen</span>
<b class="tag p" style="left:872.0px;top:1820px">Phase 1</b>
<span class="t" id="t98" style="left:2861.4px;top:1820.3px;font-size:29.5px;line-height:35px;color:#98b4ff;letter-spacing:0.45px;-webkit-text-stroke:0.3px #98b4ff;">Offen</span>
<span class="t" id="t99" style="left:3015.6px;top:1820.3px;font-size:29.5px;line-height:35px;color:#dfe1e5;letter-spacing:0.04px;-webkit-text-stroke:0.3px #dfe1e5;">18 Nov. 2024 09:34</span>
</div>
<div class="ln" style="top:1878px"></div>
<div class="row">
<i class="n" style="top:1906px">N</i>
<span class="t" id="t100" style="left:512.5px;top:1902.3px;font-size:29.5px;line-height:35px;color:#dfe1e5;letter-spacing:-0.31px;-webkit-text-stroke:0.3px #dfe1e5;">SW-1 - Mit allen Modernen Webbrowser kompatibel (Chrome, Firefox, Safari und Edge)</span>
<b class="tag p" style="left:1644.0px;top:1902px">Phase 1</b>
<span class="t" id="t101" style="left:2861.4px;top:1902.3px;font-size:29.5px;line-height:35px;color:#98b4ff;letter-spacing:0.45px;-webkit-text-stroke:0.3px #98b4ff;">Offen</span>
<span class="t" id="t102" style="left:3015.6px;top:1902.3px;font-size:29.5px;line-height:35px;color:#dfe1e5;letter-spacing:-0.18px;-webkit-text-stroke:0.3px #dfe1e5;">18 Nov. 2024 10:03</span>
</div>
<div class="ln" style="top:1960px"></div>
<div class="row">
<svg class="a" style="left:414px;top:1987px" width="32" height="32" viewBox="-16 -16 32 32"><path d="M0.00 -12.90 L3.82 -4.66 L12.84 -3.57 L6.18 2.61 L7.94 11.52 L0.00 7.10 L-7.94 11.52 L-6.18 2.61 L-12.84 -3.57 L-3.82 -4.66Z" fill="#d8b05e" stroke="#d8b05e" stroke-width="2.6" stroke-linejoin="round"/></svg>
<i class="n" style="top:1988px">N</i>
<span class="t" id="t103" style="left:512.5px;top:1984.3px;font-size:29.5px;line-height:35px;color:#dfe1e5;letter-spacing:-0.08px;-webkit-text-stroke:0.3px #dfe1e5;">ZUG-3 - Rollen</span>
<b class="tag p" style="left:725.0px;top:1984px">Phase 1</b>
<span class="t" id="t104" style="left:2861.4px;top:1984.3px;font-size:29.5px;line-height:35px;color:#98b4ff;letter-spacing:0.45px;-webkit-text-stroke:0.3px #98b4ff;">Offen</span>
<span class="t" id="t105" style="left:3015.6px;top:1984.3px;font-size:29.5px;line-height:35px;color:#dfe1e5;letter-spacing:0.02px;-webkit-text-stroke:0.3px #dfe1e5;">18 Nov. 2024 09:47</span>
</div>
<div class="ln" style="top:2042px"></div>
<div class="row">
<svg class="a" style="left:414px;top:2069px" width="32" height="32" viewBox="-16 -16 32 32"><path d="M0.00 -12.90 L3.82 -4.66 L12.84 -3.57 L6.18 2.61 L7.94 11.52 L0.00 7.10 L-7.94 11.52 L-6.18 2.61 L-12.84 -3.57 L-3.82 -4.66Z" fill="#d8b05e" stroke="#d8b05e" stroke-width="2.6" stroke-linejoin="round"/></svg>
<i class="n" style="top:2070px">N</i>
<span class="t" id="t106" style="left:512.5px;top:2066.3px;font-size:29.5px;line-height:35px;color:#dfe1e5;letter-spacing:-0.17px;-webkit-text-stroke:0.3px #dfe1e5;">ZUG-1 - Benutzername und Passwortauthentifizierung</span>
<b class="tag p" style="left:1227.8px;top:2066px">Phase 1</b>
<span class="t" id="t107" style="left:2861.4px;top:2066.3px;font-size:29.5px;line-height:35px;color:#98b4ff;letter-spacing:0.45px;-webkit-text-stroke:0.3px #98b4ff;">Offen</span>
<span class="t" id="t108" style="left:3015.6px;top:2066.3px;font-size:29.5px;line-height:35px;color:#dfe1e5;letter-spacing:0.02px;-webkit-text-stroke:0.3px #dfe1e5;">18 Nov. 2024 09:46</span>
</div>
<div class="ln" style="top:2124px"></div>
</main>
</div>
</body></html>
